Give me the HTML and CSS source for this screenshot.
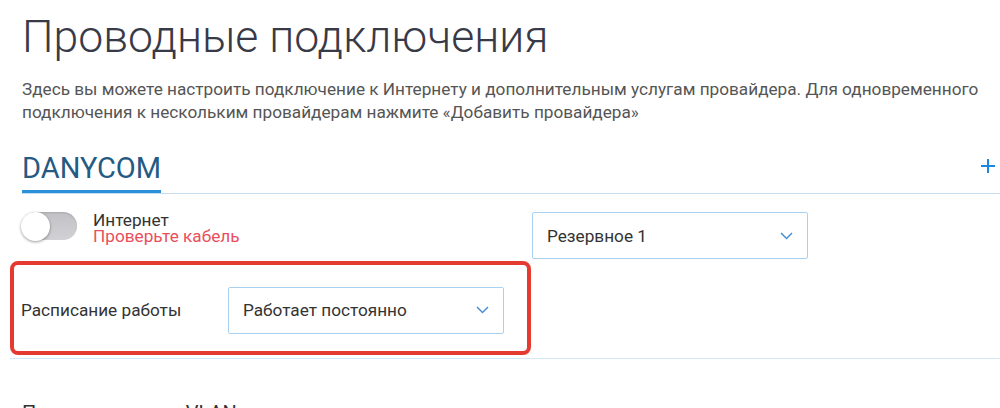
FILE: index.html
```html
<!DOCTYPE html>
<html lang="ru">
<head>
  <meta charset="UTF-8">
  <meta name="viewport" content="width=device-width, initial-scale=1.0">
  <title>Проводные подключения</title>
  <link rel="stylesheet" href="styles.css">
</head>
<body>
  <main class="page">
    <h1 class="page-title">Проводные подключения</h1>
    <p class="page-intro">Здесь вы можете настроить подключение к Интернету и дополнительным услугам провайдера. Для одновременного подключения к нескольким провайдерам нажмите «Добавить провайдера»</p>

    <section class="provider">
      <div class="provider-head">
        <h2 class="provider-name">DANYCOM</h2>
        <button class="add-btn" type="button" title="Добавить провайдера">
          <svg width="14" height="14" viewBox="0 0 14 14"><path d="M7 0v14M0 7h14" stroke="#1e88e0" stroke-width="2"/></svg>
        </button>
      </div>

      <div class="provider-row">
        <div class="provider-state">
          <span class="toggle"><span class="toggle-knob"></span></span>
          <div class="state-text">
            <div class="state-title">Интернет</div>
            <div class="state-error">Проверьте кабель</div>
          </div>
        </div>
        <div class="select">
          <span>Резервное 1</span>
          <svg width="13" height="8" viewBox="0 0 13 8"><path d="M1 1l5.5 5.5L12 1" fill="none" stroke="#4a8fd2" stroke-width="1.5"/></svg>
        </div>
      </div>

      <div class="schedule-block">
        <div class="schedule">
          <span class="schedule-label">Расписание работы</span>
          <div class="select">
            <span>Работает постоянно</span>
            <svg width="13" height="8" viewBox="0 0 13 8"><path d="M1 1l5.5 5.5L12 1" fill="none" stroke="#4a8fd2" stroke-width="1.5"/></svg>
          </div>
        </div>
      </div>
    </section>

    <h2 class="next-title">Подключение по VLAN</h2>
  </main>
</body>
</html>
```

FILE: styles.css
```css
body {
  margin: 0;
  padding: 0;
  background: #fff;
  font-family: Roboto, "Liberation Sans", Arial, sans-serif;
  color: #333;
  overflow: hidden;
}
.page {
  padding-left: 22px;
}
.page-title {
  margin: 11px 0 0;
  font-size: 44.5px;
  line-height: 52px;
  font-weight: 300;
  color: #393a47;
}
.page-intro {
  margin: 15px 0 0;
  font-size: 17.2px;
  line-height: 23px;
  color: #555;
}
.provider {
  margin-top: 27px;
}
.provider-head {
  display: flex;
  justify-content: space-between;
  align-items: flex-start;
  border-bottom: 1px solid #c6dcef;
}
.provider-name {
  margin: 0;
  padding-bottom: 4px;
  font-size: 29px;
  line-height: 35px;
  font-weight: 400;
  color: #255a83;
  border-bottom: 3px solid #2b8fd9;
}
.add-btn {
  margin: 8px 5px 0 0;
  padding: 0;
  border: none;
  background: none;
  cursor: pointer;
  line-height: 0;
}
.provider-row {
  display: flex;
  align-items: flex-start;
  margin-top: 18px;
}
.provider-state {
  flex: 0 0 510px;
  display: flex;
  align-items: flex-start;
}
.toggle {
  position: relative;
  width: 55px;
  height: 28px;
  border-radius: 14px;
  background: linear-gradient(#c0c0c5, #d2d2d6);
  box-shadow: inset 0 1px 2px rgba(0, 0, 0, 0.12);
}
.toggle-knob {
  position: absolute;
  left: -1px;
  top: 0;
  width: 29px;
  height: 29px;
  border-radius: 50%;
  background: #fff;
  box-shadow: 0 1px 3px rgba(0, 0, 0, 0.4);
}
.state-text {
  margin: 1px 0 0 16px;
  font-size: 17.2px;
  line-height: 15.5px;
}
.state-title {
  color: #333;
}
.state-error {
  color: #ea4e5b;
}
.select {
  display: flex;
  justify-content: space-between;
  align-items: center;
  box-sizing: border-box;
  width: 276px;
  height: 47px;
  padding: 0 14px 0 14px;
  border: 1px solid #a9d1f1;
  border-radius: 2px;
  font-size: 17.2px;
  color: #333;
  background: #fff;
}
.schedule-block {
  margin: 2px 0 0 -12px;
  padding-bottom: 3px;
  border-bottom: 1px solid #d4e8f5;
}
.schedule {
  display: flex;
  align-items: center;
  box-sizing: border-box;
  width: 521px;
  height: 94px;
  padding: 4px 0 0 7px;
  border: 4px solid #e53a2f;
  border-radius: 8px;
}
.schedule-label {
  width: 207px;
  font-size: 17.2px;
  color: #333;
}
.next-title {
  margin: 42px 0 0;
  font-size: 20px;
  line-height: 24px;
  font-weight: 400;
  color: #333;
}
```
